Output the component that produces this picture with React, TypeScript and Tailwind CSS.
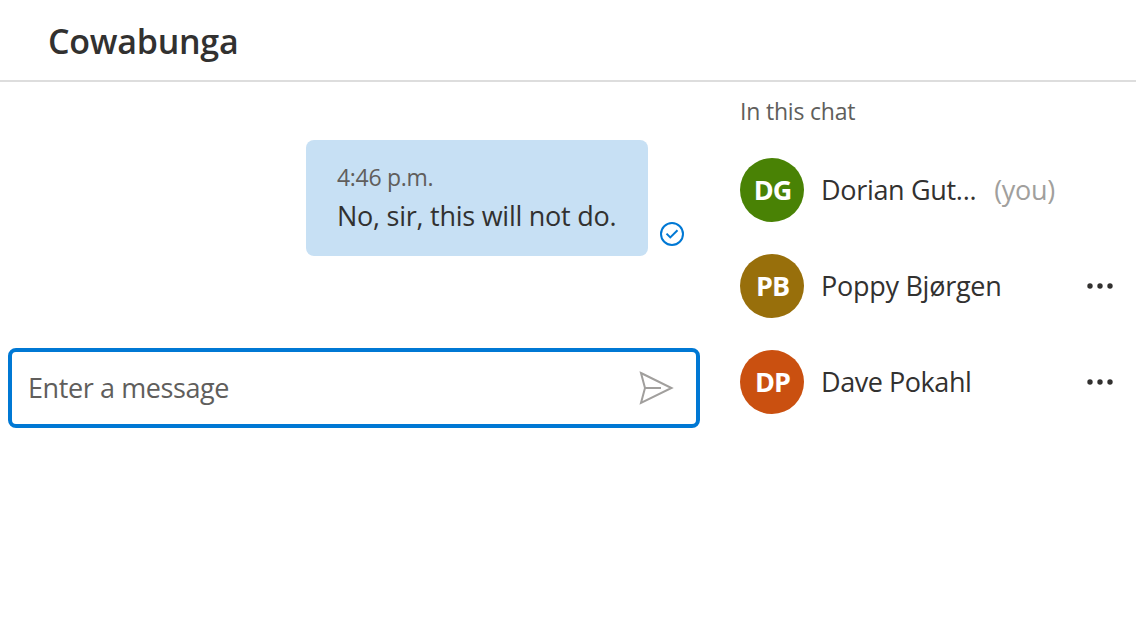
type Person = { initials: string; name: string; color: string; spacing: string; you?: boolean };

const people: Person[] = [
  { initials: 'DG', name: 'Dorian Gut...', color: 'bg-[#498205]', spacing: 'tracking-[-0.32px]', you: true },
  { initials: 'PB', name: 'Poppy Bjørgen', color: 'bg-[#986f0b]', spacing: 'tracking-[-0.27px]' },
  { initials: 'DP', name: 'Dave Pokahl', color: 'bg-[#ca5010]', spacing: 'tracking-[-0.45px]' },
];

function SentIcon() {
  return (
    <svg width="24" height="24" viewBox="0 0 24 24" fill="none" stroke="#0078d4" strokeWidth="2">
      <circle cx="12" cy="12" r="11" />
      <path d="M6.5 11.6 10.3 15.4 17.5 8.2" />
    </svg>
  );
}

function SendIcon() {
  return (
    <svg width="36" height="36" viewBox="0 0 36 36" fill="none" stroke="#a19f9d" strokeWidth="2">
      <path d="M3 3 33.5 18 3 33 7 18ZM7 18H23" />
    </svg>
  );
}

function MoreIcon() {
  return (
    <svg width="26" height="6" viewBox="0 0 26 6" fill="#323130">
      <circle cx="3" cy="3" r="2.7" />
      <circle cx="13" cy="3" r="2.7" />
      <circle cx="23" cy="3" r="2.7" />
    </svg>
  );
}

export default function App() {
  return (
    <div className="flex h-[640px] w-[1136px] flex-col overflow-hidden bg-white font-['Open_Sans','Noto_Sans',sans-serif] text-[#323130]">
      <header className="flex h-[82px] shrink-0 items-center border-b-2 border-[#dddddd] pl-12">
        <h1 className="mt-0.5 text-[34px] leading-[48px] font-semibold tracking-[-0.25px]">Cowabunga</h1>
      </header>
      <div className="flex flex-1">
        <main className="flex w-[700px] flex-col pt-[58px] pl-2">
          <div className="flex items-end justify-end pr-4">
            <div className="h-[116px] w-[342px] rounded-[8px] bg-[#c7e0f4] pt-[19px] pl-[31px] whitespace-nowrap">
              <div className="text-[23px] leading-9 tracking-[-0.3px] text-[#605e5c]">4:46 p.m.</div>
              <div className="pt-px text-[27px] leading-10 tracking-[-0.25px]">No, sir, this will not do.</div>
            </div>
            <div className="mb-[10px] ml-3">
              <SentIcon />
            </div>
          </div>
          <div className="mt-[92px] flex h-20 w-[692px] items-center justify-between rounded-[8px] border-4 border-[#0078d4] pr-[22px] pl-4">
            <span className="text-[27px] leading-10 tracking-[-0.4px] text-[#605e5c]">Enter a message</span>
            <SendIcon />
          </div>
        </main>
        <aside className="flex flex-1 flex-col pt-[11px] pl-10">
          <h2 className="text-[23px] leading-9 tracking-[-0.2px] text-[#605e5c]">In this chat</h2>
          <ul className="mt-[29px] flex flex-col gap-8">
            {people.map((p) => (
              <li key={p.initials} className="flex h-16 items-center pr-[23px]">
                <div className={`flex size-16 items-center justify-center rounded-full pl-px text-[27px] font-bold tracking-[-1px] text-white ${p.color}`}>
                  {p.initials}
                </div>
                <span className={`ml-[17px] text-[27px] leading-10 whitespace-nowrap ${p.spacing}`}>{p.name}</span>
                {p.you ? (
                  <span className="ml-[18px] text-[27px] leading-10 tracking-[-0.3px] text-[#a19f9d]">(you)</span>
                ) : (
                  <span className="ml-auto">
                    <MoreIcon />
                  </span>
                )}
              </li>
            ))}
          </ul>
        </aside>
      </div>
    </div>
  );
}
